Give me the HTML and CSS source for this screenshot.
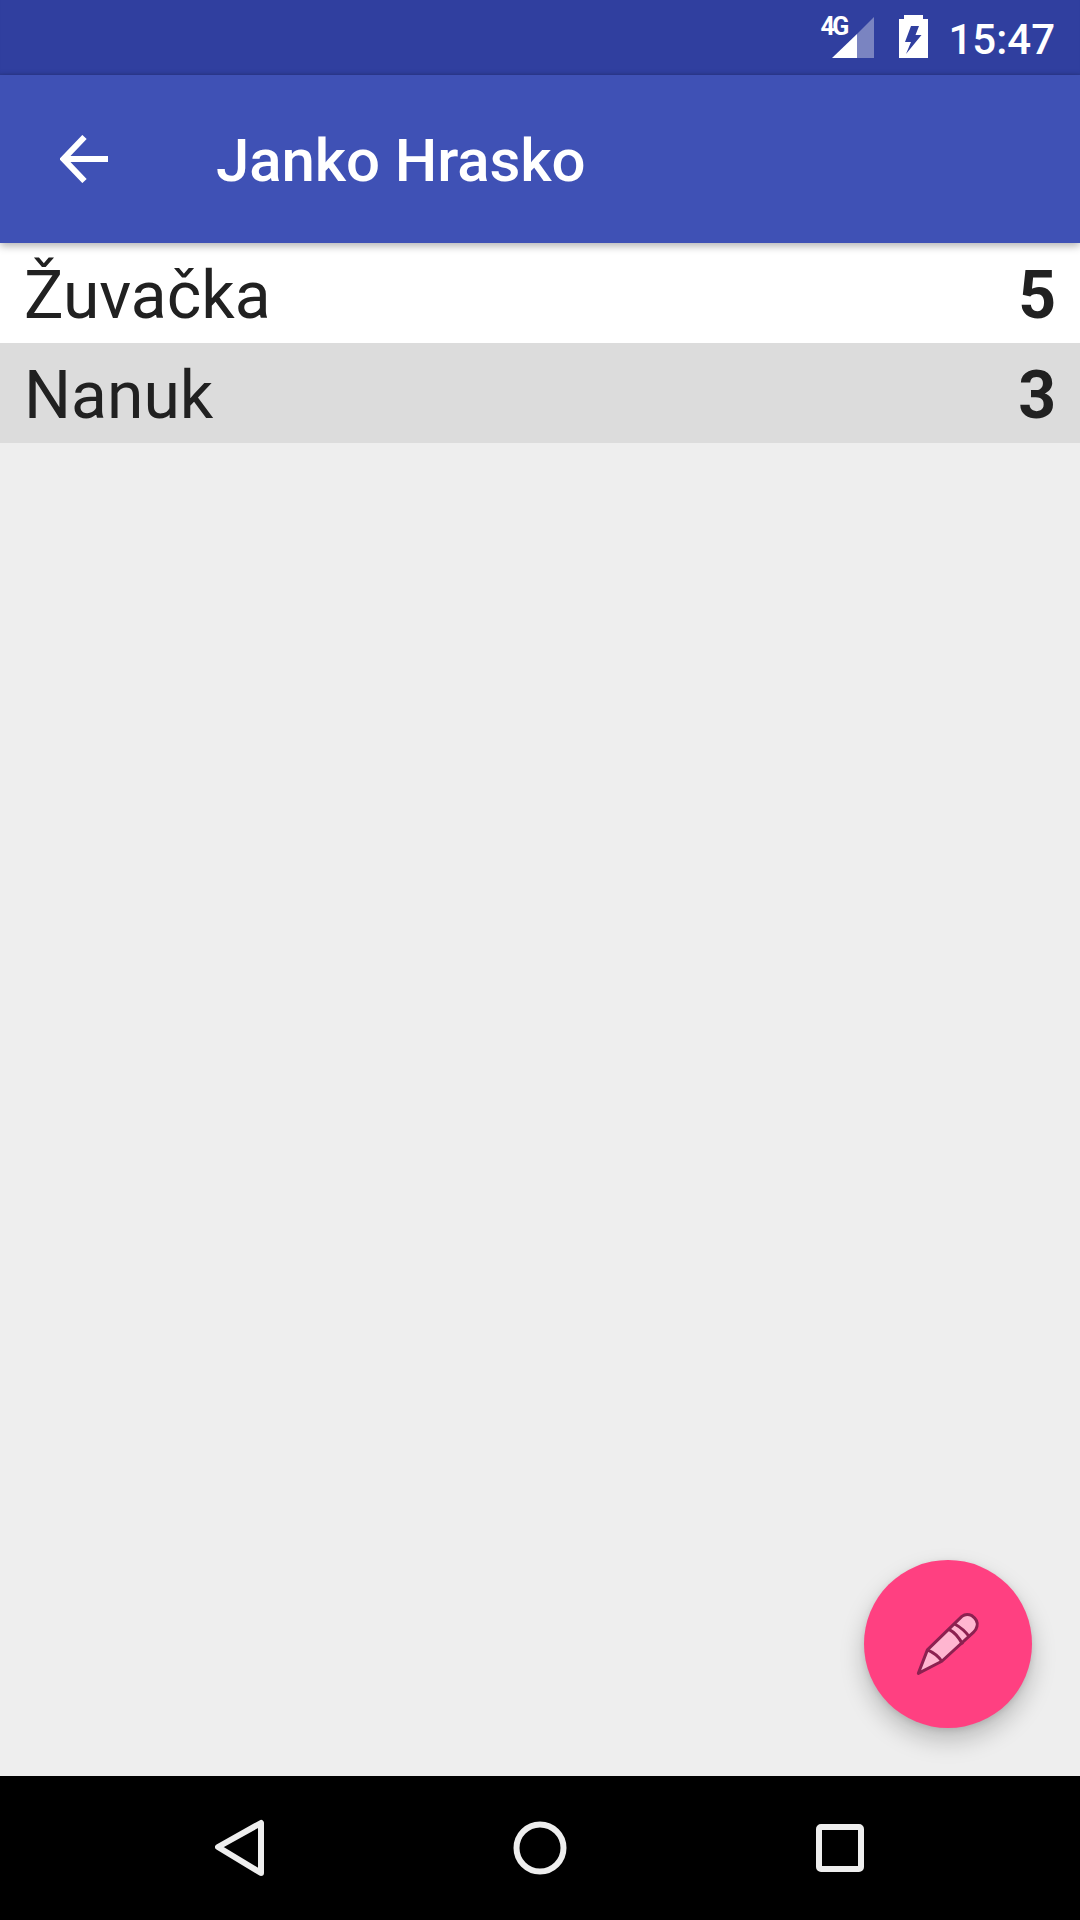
FILE: index.html
```html
<!DOCTYPE html>
<html lang="sk">
<head>
<meta charset="utf-8">
<title>Janko Hrasko</title>
<link rel="stylesheet" href="styles.css">
</head>
<body>
<div class="screen">
  <header class="status">
    <div class="signal">
      <span class="net">4G</span>
      <svg class="signal-icon" viewBox="0 0 42 41" width="42" height="41"><path d="M42 0V41H25V17Z" fill="#fff" fill-opacity=".36"/><path d="M25 17V41H0Z" fill="#fff"/></svg>
    </div>
    <svg class="battery" viewBox="0 0 29 43" width="29" height="43"><path fill="#fff" d="M5 0H24V4H29V43H0V4H5Z"/><path fill="#303f9f" d="M12 11H20L16.500 20H22.500L7 39 12 27H6Z"/></svg>
    <span class="time">15:47</span>
  </header>
  <div class="toolbar">
    <svg class="back" viewBox="0 0 48 48" width="48" height="48"><path d="M48 24H4M24.500 2 3.500 24 24.500 46" fill="none" stroke="#fff" stroke-width="6"/></svg>
    <h1 class="title">Janko Hrasko</h1>
  </div>
  <main class="content">
    <div class="row"><span>Žuvačka</span><b class="count">5</b></div>
    <div class="row row-alt"><span>Nanuk</span><b class="count">3</b></div>
    <button class="fab" type="button" aria-label="Upraviť">
      <svg viewBox="225 242 200 200" width="67" height="67">
        <path d="M235 428 262 358 365 258Q378 248 395 256 415 270 410 288 408 298 400 305L305 392Z" fill="#ffb6d0" stroke="#8c2150" stroke-width="9" stroke-linejoin="round"/>
        <path d="M262 358Q290 370 305 392M325 296Q352 310 367 342M342 280Q370 295 388 320" fill="none" stroke="#8c2150" stroke-width="9"/>
      </svg>
    </button>
  </main>
  <nav class="navbar">
    <svg class="nav-icon" viewBox="0 0 50 58" width="50" height="58"><path d="M46 4V54L3 28Z" fill="none" stroke="#eee" stroke-width="6" stroke-linejoin="round"/></svg>
    <svg class="nav-icon" viewBox="0 0 54 54" width="54" height="54"><circle cx="27" cy="27" r="23.500" fill="none" stroke="#eee" stroke-width="6"/></svg>
    <svg class="nav-icon" viewBox="0 0 48 48" width="48" height="48"><rect x="3" y="3" width="42" height="42" rx="2" fill="none" stroke="#eee" stroke-width="6"/></svg>
  </nav>
</div>
</body>
</html>
```
FILE: styles.css
```css
* { box-sizing: border-box; }
html, body { margin: 0; padding: 0; }
body { font-family: Roboto, "Noto Sans", sans-serif; }
.screen { width: 1080px; height: 1920px; display: flex; flex-direction: column; overflow: hidden; background: #eeeeee; }
.status { height: 75px; flex: none; background: #303f9f; display: flex; align-items: flex-start; justify-content: flex-end; padding-right: 25px; color: #fff; box-shadow: inset 0 -3px 3px -2px rgba(0,0,0,.12); }
.signal { position: relative; width: 53px; height: 58px; margin-right: 25px; display: flex; align-items: flex-end; justify-content: flex-end; }
.net { position: absolute; left: -1px; top: 12px; font-size: 25px; line-height: 29px; font-weight: 700; letter-spacing: -2.5px; }
.battery { margin: 15px 20px 0 0; }
.time { font-size: 42px; line-height: 49px; font-weight: 500; margin-top: 15px; }
.toolbar { height: 168px; flex: none; background: #3f51b5; display: flex; align-items: center; padding-left: 60px; position: relative; z-index: 1; box-shadow: 0 3px 8px rgba(0,0,0,.3); }
.back { margin-right: 108px; margin-top: -1px; }
.title { margin: 3px 0 0; font-size: 60px; line-height: 70px; font-weight: 500; color: #fff; letter-spacing: -.1px; }
.content { flex: 1; position: relative; }
.row { height: 100px; display: flex; align-items: center; justify-content: space-between; padding: 5px 24px 0; background: #fff; color: #212121; font-size: 66px; }
.row-alt { background: #dcdcdc; }
.count { font-weight: 700; }
.fab { position: absolute; left: 864px; top: 1317px; width: 168px; height: 168px; border: 0; padding: 0; border-radius: 50%; background: #ff4081; display: flex; align-items: center; justify-content: center; box-shadow: 0 12px 24px rgba(0,0,0,.22), 0 2px 6px rgba(0,0,0,.1); }
.navbar { height: 144px; flex: none; background: #000; position: relative; display: flex; align-items: center; justify-content: center; gap: 0; }
.nav-icon { position: absolute; }
.nav-icon:nth-child(1) { left: 215px; top: 43px; }
.nav-icon:nth-child(2) { left: 513px; top: 45px; }
.nav-icon:nth-child(3) { left: 816px; top: 48px; }
```
